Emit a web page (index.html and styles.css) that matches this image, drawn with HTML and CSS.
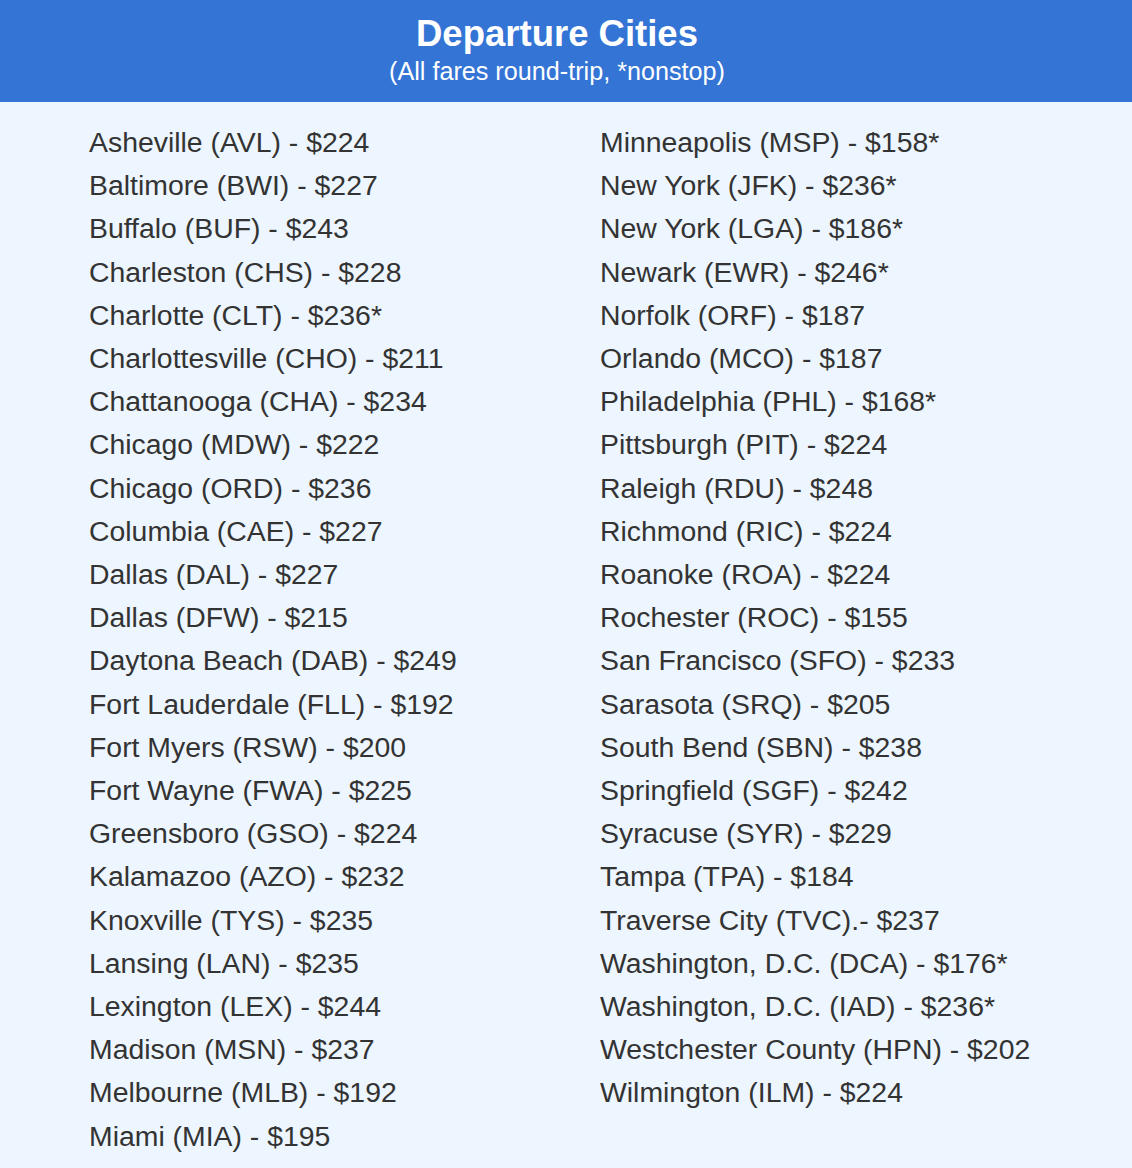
FILE: index.html
```html
<!DOCTYPE html>
<html>
<head>
<meta charset="utf-8">
<link rel="stylesheet" href="styles.css">
</head>
<body>
<header class="banner">
  <h1 class="title">Departure Cities</h1>
  <p class="subtitle">(All fares round-trip, *nonstop)</p>
</header>
<main class="cities">
  <ul class="col">
    <li>Asheville (AVL) - $224</li>
    <li>Baltimore (BWI) - $227</li>
    <li>Buffalo (BUF) - $243</li>
    <li>Charleston (CHS) - $228</li>
    <li>Charlotte (CLT) - $236*</li>
    <li>Charlottesville (CHO) - $211</li>
    <li>Chattanooga (CHA) - $234</li>
    <li>Chicago (MDW) - $222</li>
    <li>Chicago (ORD) - $236</li>
    <li>Columbia (CAE) - $227</li>
    <li>Dallas (DAL) - $227</li>
    <li>Dallas (DFW) - $215</li>
    <li>Daytona Beach (DAB) - $249</li>
    <li>Fort Lauderdale (FLL) - $192</li>
    <li>Fort Myers (RSW) - $200</li>
    <li>Fort Wayne (FWA) - $225</li>
    <li>Greensboro (GSO) - $224</li>
    <li>Kalamazoo (AZO) - $232</li>
    <li>Knoxville (TYS) - $235</li>
    <li>Lansing (LAN) - $235</li>
    <li>Lexington (LEX) - $244</li>
    <li>Madison (MSN) - $237</li>
    <li>Melbourne (MLB) - $192</li>
    <li>Miami (MIA) - $195</li>
  </ul>
  <ul class="col">
    <li>Minneapolis (MSP) - $158*</li>
    <li>New York (JFK) - $236*</li>
    <li>New York (LGA) - $186*</li>
    <li>Newark (EWR) - $246*</li>
    <li>Norfolk (ORF) - $187</li>
    <li>Orlando (MCO) - $187</li>
    <li>Philadelphia (PHL) - $168*</li>
    <li>Pittsburgh (PIT) - $224</li>
    <li>Raleigh (RDU) - $248</li>
    <li>Richmond (RIC) - $224</li>
    <li>Roanoke (ROA) - $224</li>
    <li>Rochester (ROC) - $155</li>
    <li>San Francisco (SFO) - $233</li>
    <li>Sarasota (SRQ) - $205</li>
    <li>South Bend (SBN) - $238</li>
    <li>Springfield (SGF) - $242</li>
    <li>Syracuse (SYR) - $229</li>
    <li>Tampa (TPA) - $184</li>
    <li>Traverse City (TVC).- $237</li>
    <li>Washington, D.C. (DCA) - $176*</li>
    <li>Washington, D.C. (IAD) - $236*</li>
    <li>Westchester County (HPN) - $202</li>
    <li>Wilmington (ILM) - $224</li>
  </ul>
</main>
</body>
</html>
```
FILE: styles.css
```css
html, body {
  margin: 0;
  padding: 0;
}
body {
  background: #edf5fe;
  font-family: "Liberation Sans", Arial, Helvetica, sans-serif;
  color: #333333;
  width: 1132px;
  min-height: 1168px;
}
.banner {
  background: #3374d5;
  color: #ffffff;
  text-align: center;
  height: 102px;
  box-sizing: border-box;
  padding: 14px 18px 0 0;
}
.title {
  margin: 0;
  font-size: 36.5px;
  line-height: 40px;
  font-weight: bold;
}
.subtitle {
  margin: 2px 0 0 0;
  font-size: 25.2px;
  line-height: 30px;
}
.cities {
  display: grid;
  grid-template-columns: 511px 1fr;
  padding: 19px 0 0 89px;
}
.col {
  list-style: none;
  margin: 0;
  padding: 0;
}
.col li {
  font-size: 28.4px;
  line-height: 43.2px;
  white-space: nowrap;
}
```
